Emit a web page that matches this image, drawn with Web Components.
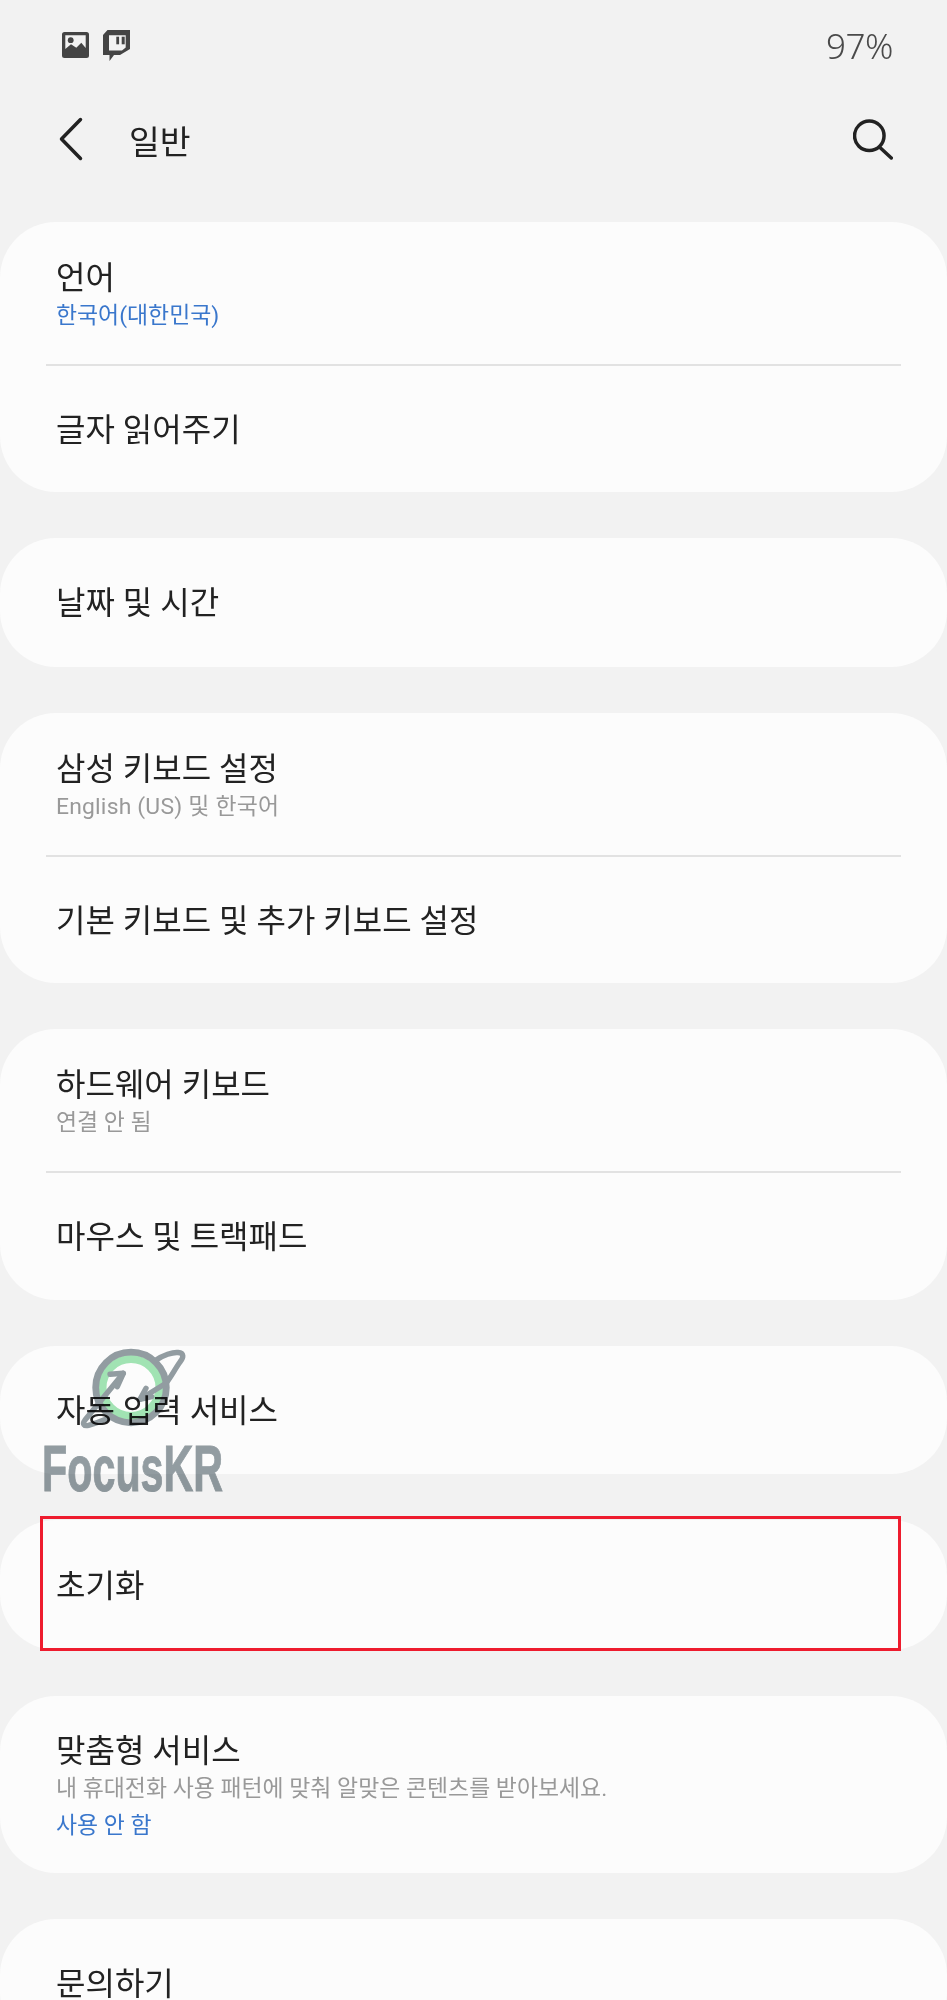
<!DOCTYPE html>
<html lang="ko"><head><meta charset="utf-8"><title>일반</title>
<style>
html,body{margin:0;padding:0;background:#f2f2f2}
body{font-family:Roboto,"Noto Sans CJK KR",sans-serif}
</style></head><body>
<settings-page>
  <status-bar></status-bar>
  <app-bar>일반</app-bar>
  <settings-card>
    <settings-row tall height="142">언어<span slot="sub" class="x">한국어(대한민국)</span></settings-row>
    <settings-row divider height="128">글자 읽어주기</settings-row>
  </settings-card>
  <settings-card>
    <settings-row height="129">날짜 및 시간</settings-row>
  </settings-card>
  <settings-card>
    <settings-row tall height="142">삼성 키보드 설정<span slot="sub" style="letter-spacing:.2px">English (US) 및 한국어</span></settings-row>
    <settings-row divider height="128">기본 키보드 및 추가 키보드 설정</settings-row>
  </settings-card>
  <settings-card>
    <settings-row tall height="142">하드웨어 키보드<span slot="sub">연결 안 됨</span></settings-row>
    <settings-row divider height="129">마우스 및 트랙패드</settings-row>
  </settings-card>
  <settings-card>
    <settings-row height="128">자동 입력 서비스</settings-row>
  </settings-card>
  <settings-card>
    <settings-row height="130">초기화</settings-row>
    <highlight-box></highlight-box>
  </settings-card>
  <settings-card>
    <settings-row tall height="177">맞춤형 서비스<span slot="sub">내 휴대전화 사용 패턴에 맞춰 알맞은 콘텐츠를 받아보세요.</span><span slot="link">사용 안 함</span></settings-row>
  </settings-card>
  <settings-card>
    <settings-row height="129" style="line-height:30px">문의하기</settings-row>
  </settings-card>
  <focus-watermark></focus-watermark>
</settings-page>
<script>
function def(name, html){
  customElements.define(name, class extends HTMLElement{
    constructor(){super();this.attachShadow({mode:'open'}).innerHTML=html;}
    connectedCallback(){
      if(this.hasAttribute('height')) this.style.height=this.getAttribute('height')+'px';
    }
  });
}
def('settings-page',`<style>
:host{display:flex;flex-direction:column;position:relative;height:2000px;overflow:hidden;background:#f2f2f2;color:#222}
</style><slot></slot>`);
def('status-bar',`<style>
:host{display:flex;align-items:flex-start;justify-content:space-between;height:88px;padding:30px 54px 0 62px;box-sizing:border-box;flex:none}
.ic{display:flex;gap:14px;align-items:flex-start}
svg{display:block}
.p{margin-top:2px}
.b{font:300 35px/1 "Noto Sans",Roboto,sans-serif;color:#4a4a4a;margin-top:-2px;letter-spacing:-.5px}
</style>
<div class="ic">
<svg class="p" width="27" height="26" viewBox="0 0 27 26"><path fill="#444" fill-rule="evenodd" d="M2.500 0h22A2.500 2.500 0 0 1 27 2.500v21a2.500 2.500 0 0 1-2.500 2.500h-22A2.500 2.500 0 0 1 0 23.500v-21A2.500 2.500 0 0 1 2.500 0zM3.300 3.300V17L9 12.300l5.300 3.400 5-5 4.400 5.300V3.300z"/><circle cx="8.700" cy="8.200" r="2.900" fill="#444"/></svg>
<svg width="27" height="31" viewBox="0 0 27 31"><path fill="#444" fill-rule="evenodd" d="M4.500 0H27v19l-10 6h-6l-4.500 6v-6H0V5zM6 5.300V20.500h6.500L19 20.500l3.700-3V5.300z"/><rect x="13.300" y="6.700" width="2.800" height="7.600" fill="#444"/><rect x="18.700" y="6.700" width="3" height="7.600" fill="#444"/></svg>
</div>
<div class="b">97%</div>`);
def('app-bar',`<style>
:host{display:flex;align-items:flex-start;height:134px;padding:0 54px 0 59px;box-sizing:border-box;flex:none;font-size:33.500px;color:#222;line-height:40px}
svg{display:block;flex:none}
.t{margin-left:46px;flex:1;position:relative;top:4px}
.row{display:flex;align-items:center;width:100%;height:102px}
</style>
<div class="row">
<svg width="24" height="44" viewBox="0 0 24 44"><path d="M21.500 2.500 2.500 22l19 19.500" fill="none" stroke="#222" stroke-width="3.500" stroke-linecap="round" stroke-linejoin="round"/></svg>
<div class="t"><slot></slot></div>
<svg width="40" height="41" viewBox="0 0 40 41"><circle cx="16.300" cy="16.800" r="14.750" fill="none" stroke="#222" stroke-width="3.500"/><path d="M27.500 29 38.300 39" stroke="#222" stroke-width="3.500" stroke-linecap="round"/></svg>
</div>`);
def('settings-card',`<style>
:host{display:flex;flex-direction:column;position:relative;flex:none;background:#fcfcfc;border-radius:56px;margin-bottom:46px}
</style><slot></slot>`);
def('settings-row',`<style>
:host{display:flex;flex-direction:column;justify-content:center;position:relative;box-sizing:border-box;padding:1px 56px 0;font-size:32px;line-height:40px;color:#222}
:host([tall]){padding-top:6px}
:host([divider]){border-top:2px solid transparent}
:host([divider])::before{content:"";position:absolute;left:46px;right:46px;top:-2px;height:2px;background:#e2e2e2}
.sub{font-size:22.900px;line-height:36px;color:#999}
.link{font-size:22.900px;line-height:38px;color:#3a77cc}
::slotted([slot=sub].x){color:#3a77cc}
</style><div><slot></slot></div><div class="sub"><slot name="sub"></slot></div><div class="link"><slot name="link"></slot></div>`);
def('highlight-box',`<style>
:host{display:block;position:absolute;left:40px;right:46px;top:-4px;bottom:-1px;border:3px solid #ee1c2e;box-sizing:border-box;pointer-events:none}
</style>`);
def('focus-watermark',`<style>
:host{display:block;position:absolute;left:44px;top:1345px;width:180px;height:152px;mix-blend-mode:multiply}
svg{position:absolute;left:0;top:0}
.w{position:absolute;left:-2px;top:92px;font:700 65px/64px "Liberation Sans",sans-serif;color:#949ea3;-webkit-text-stroke:1px #949ea3;transform:scaleX(.635);transform-origin:0 0;white-space:nowrap}
</style>
<svg width="180" height="100" viewBox="0 0 180 100">
<circle cx="87" cy="42.500" r="28.500" fill="none" stroke="#a3e6b5" stroke-width="8"/>
<circle cx="87" cy="42.500" r="35.300" fill="none" stroke="#949ea3" stroke-width="6.800"/>
<g fill="none" stroke="#949ea3" stroke-width="5.400" stroke-linecap="round" stroke-linejoin="round">
<path d="M111 15.700C119 10 129 7 134 7.500 140 8 140 12 136 17 131 24 127 32 122 38.300L96 54.300"/>
<path d="M79.300 28.300 41 75C38 79 40 81.500 44.500 80.300 51 78.500 58 76 64.300 73.300"/>
<path d="M66 29.300 79.300 28.300 73.300 41.700"/>
<path d="M102 43.300 96 54.300 107.700 51.700"/>
</g>
</svg>
<div class="w">FocusKR</div>`);
</script>
</body></html>
